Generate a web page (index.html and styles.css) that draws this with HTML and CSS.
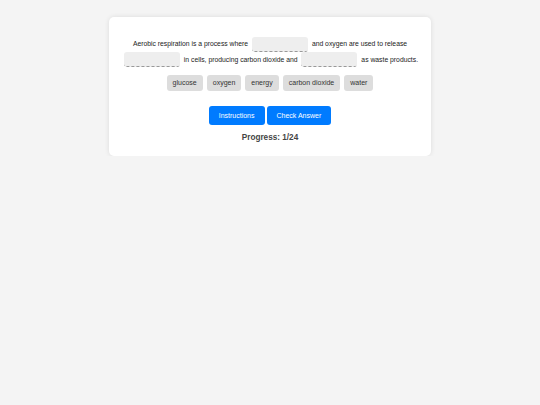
FILE: index.html
```html
<!DOCTYPE html>
<html lang="en">
<head>
  <meta charset="UTF-8">
  <title>Fill in the Blanks</title>
  <link rel="stylesheet" href="styles.css">
</head>
<body>

  <div class="tarjeta">
    <p class="frase">
      Aerobic respiration is a process where <span class="hueco"></span> and oxygen are used to release
      <span class="hueco"></span> in cells, producing carbon dioxide and <span class="hueco"></span> as waste products.
    </p>

    <div class="palabras">
      <span class="palabra">glucose</span>
      <span class="palabra">oxygen</span>
      <span class="palabra">energy</span>
      <span class="palabra">carbon dioxide</span>
      <span class="palabra">water</span>
    </div>

    <div class="botones">
      <button>Instructions</button>
      <button>Check Answer</button>
    </div>

    <div class="progreso">Progress: 1/24</div>
  </div>

</body>
</html>
```

FILE: styles.css
```css
body {
  font-family: "Liberation Sans", Arial, sans-serif;
  background-color: #f4f4f4;
  margin: 0;
  padding-top: 17px;
}
.tarjeta {
  box-sizing: border-box;
  width: 322px;
  margin: 0 auto;
  background-color: white;
  border-radius: 5px;
  padding: 10px 10px 13px;
  box-shadow: 0 0 5px rgba(0,0,0,0.1);
  text-align: center;
}
.frase {
  margin: 9px 0 0;
  font-size: 6.8px;
  line-height: 15px;
  color: #222;
}
.hueco {
  display: inline-block;
  box-sizing: border-box;
  width: 56px;
  height: 15px;
  margin: 0 2px;
  vertical-align: middle;
  background-color: #eeeeee;
  border-bottom: 1px dashed #999;
  border-radius: 3px;
}
.palabras {
  margin-top: 8px;
  display: flex;
  justify-content: center;
  gap: 4px;
}
.palabra {
  height: 16px;
  line-height: 16px;
  padding: 0 6px;
  font-size: 7px;
  color: #333;
  background-color: #dddddd;
  border-radius: 3px;
}
.botones {
  margin-top: 15px;
  display: flex;
  justify-content: center;
  gap: 2px;
}
.botones button {
  height: 19px;
  padding: 0 10px;
  border: none;
  border-radius: 3px;
  background-color: #007bff;
  color: white;
  font-family: inherit;
  font-size: 7px;
  cursor: pointer;
}
.progreso {
  margin-top: 8px;
  font-size: 8.2px;
  line-height: 10px;
  font-weight: bold;
  color: #444;
}
```
